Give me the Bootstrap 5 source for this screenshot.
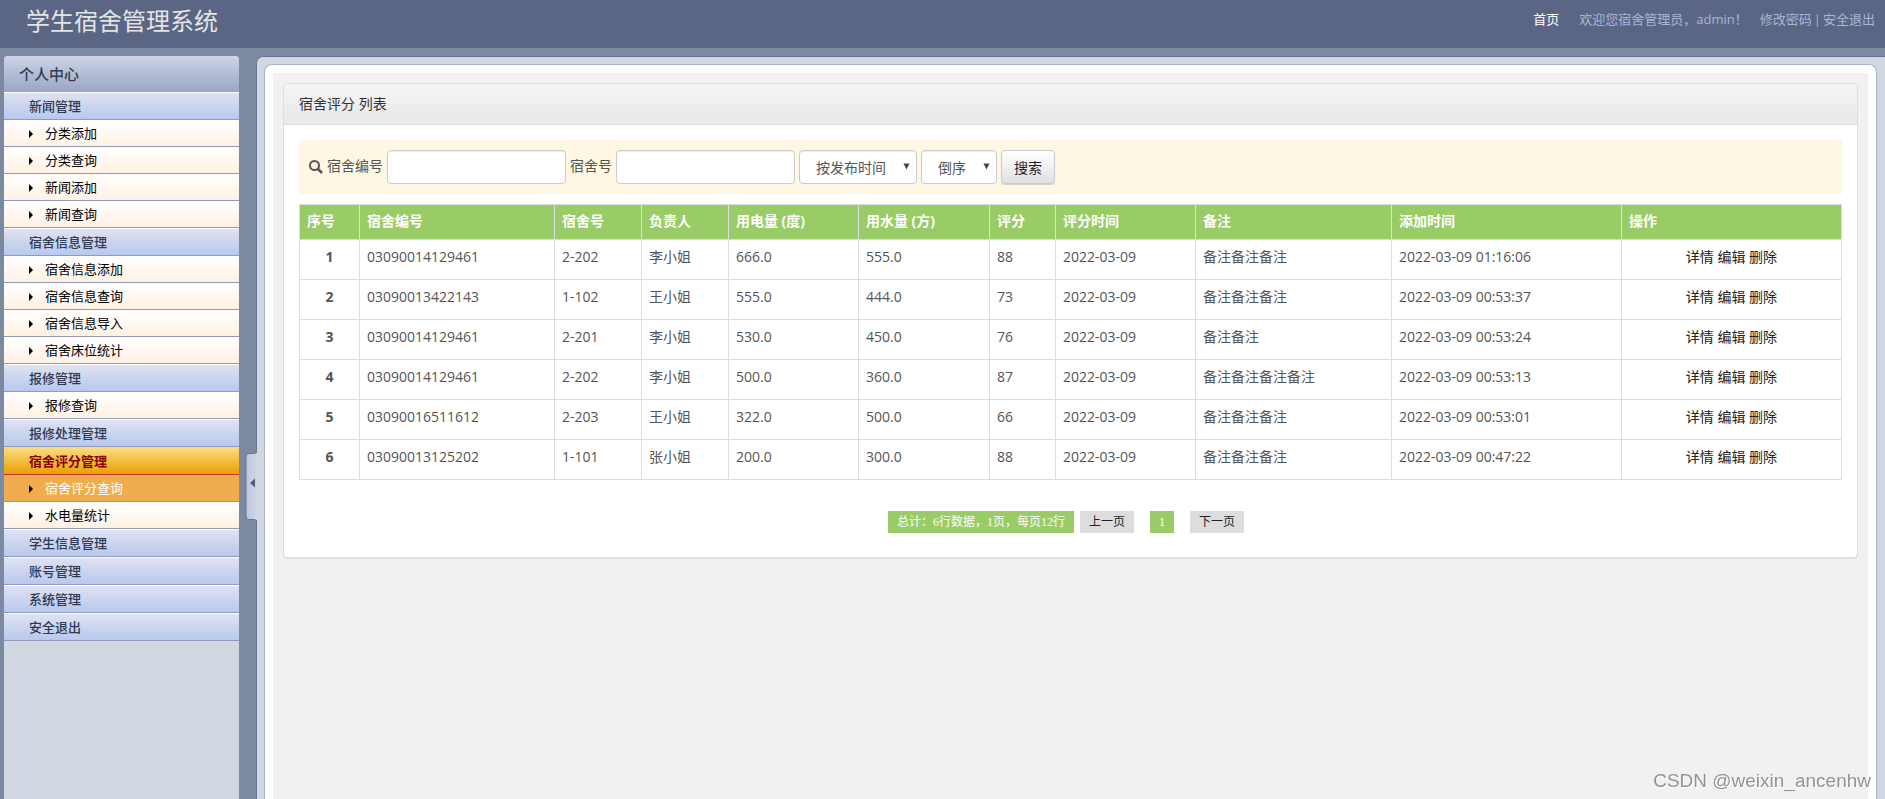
<!DOCTYPE html>
<html lang="zh-CN">
<head>
<meta charset="utf-8">
<meta name="viewport" content="width=device-width, initial-scale=1">
<title>学生宿舍管理系统</title>
<link rel="stylesheet" href="https://cdn.jsdelivr.net/npm/bootstrap@5.3.0/dist/css/bootstrap.min.css">
<style>
  body { font: 14px/20px "Open Sans", "Noto Sans CJK SC", sans-serif; color: #555; background: #7b8aa1; }
  a { text-decoration: none; }
  .site-head { height: 48px; background: #5a6684; padding: 0 10px 0 26px; }
  .site-title { font-size: 24px; line-height: 42px; color: #e4e4e4; font-weight: 400; }
  .site-links { font-size: 13px; line-height: 38px; color: #a9b6d8; gap: 12px; }
  .site-links a { color: #a9b6d8; }
  .site-links .home-link { color: #fff; margin-right: 8px; }
  .site-links .account { gap: 2px; }

  .side { width: 235px; margin: 8px 0 0 4px; background: #d1d8e2; border-radius: 4px 4px 0 0; font-size: 13px; }
  .side-head { height: 36px; line-height: 37px; padding-left: 15px; font-size: 15px; font-weight: 500; color: #333c52;
    border-radius: 4px 4px 0 0; background: linear-gradient(#cdd4e6, #9ba5c5); }
  .side a { display: block; }
  .grp { height: 28px; line-height: 26px; padding-left: 25px; font-weight: 500; color: #2e3850;
    border-top: 1px solid #fff; border-bottom: 1px solid #8f9bb9; background: linear-gradient(#dfe2f2, #b9c8ec); }
  .grp.on { color: #8a0000; border-top-color: #fbdc7d; border-bottom-color: #c8322a; background: linear-gradient(#fbdc7d, #e9a003); font-weight: 700; }
  .sub { height: 27px; line-height: 26px; padding-left: 25px; color: #000; border-bottom: 1px solid #8f9bb0;
    background: linear-gradient(#fff, #fff1e4); }
  .sub::before { content: ""; display: inline-block; border: 4px solid transparent; border-left-color: #000; border-right: 0; margin-right: 12px; }
  .sub.on { color: #fff; background: #f0ad4e; }

  .frame { margin: 8px 0 0 17px; border: solid #68739a; border-width: 1px 0 0 1px; border-radius: 7px 0 0 0; background: #d1d8e2; padding: 7px 8px 0 7px; }
  .sheet { border: 1px solid #aab5cb; border-bottom: 0; border-radius: 8px 8px 0 0; background: #fff; padding: 8px 8px 0; }
  .canvas { background: #f1f1f1; padding: 10px 10px 0; }
  .handle { left: -12px; top: 392px; width: 13px; height: 74px; }

  .panel { border: 1px solid #ddd; border-radius: 4px; box-shadow: 0 1px 1px rgba(0,0,0,.06); background: #fff; }
  .panel-top { height: 41px; line-height: 40px; padding-left: 15px; color: #333; font-size: 14px; border-bottom: 1px solid #ddd;
    border-radius: 3px 3px 0 0; background: linear-gradient(#f5f5f5, #e8e8e8); }
  .panel-main { padding: 15px 15px 24px; }
  .search { background: #fdf7e3; padding: 10px; gap: 4px; margin-bottom: 10px; }
  .search label { padding-bottom: 2px; }
  .search .form-control { width: 179px; height: 34px; border-color: #ccc; border-radius: 4px; box-shadow: inset 0 1px 1px rgba(0,0,0,.075); }
  .search .form-select { height: 34px; font-size: 14px; line-height: 20px; color: #555; border-color: #ccc; border-radius: 4px;
    padding: 7px 0 5px 16px; box-shadow: inset 0 1px 1px rgba(0,0,0,.075);
    background: #fff url("data:image/svg+xml,%3Csvg xmlns='http://www.w3.org/2000/svg' viewBox='0 0 14 14'%3E%3Cpath d='M1 1h12L7 13z' fill='%23444'/%3E%3C/svg%3E") no-repeat right 6px top 12px / 7px 7px; }
  .sel-field { width: 118px; }
  .sel-order { width: 76px; }
  .search .btn { height: 34px; width: 54px; padding: 0; font-size: 14px; color: #222; border: 1px solid #ccc; border-radius: 4px;
    background: linear-gradient(#fff, #e0e0e0); box-shadow: 0 1px 1px rgba(0,0,0,.15); }

  .grid { table-layout: fixed; margin: 0; color: #555; border-color: #ddd; }
  .grid th, .grid td { padding: 4px 7px; border: 1px solid #ddd; white-space: nowrap; }
  .grid thead th { height: 35px; padding: 4px 7px 8px; background: #9c6; color: #fff; font-weight: 700; }
  .grid tbody th, .grid tbody td { height: 40px; line-height: 26px; color: #555; }
  .grid td a { color: #222; }
  .pager { margin-top: 31px; padding-right: 9px; font: 12px/22px "Liberation Serif", "Noto Sans CJK SC", serif; }
  .pager > * { height: 22px; padding: 0 9px; background: #ddd; color: #222; }
  .pager .hot { background: #9c6; color: #fff; }
  .pager span { margin-right: 6px; }
  .csdn { right: 14px; bottom: 6px; font: 19px/24px "Liberation Sans", sans-serif; color: #939393; text-shadow: 1px 1px 0 #fff; }
</style>
</head>
<body>
<div class="d-flex flex-column min-vh-100">
  <header class="site-head d-flex justify-content-between align-items-start">
    <h1 class="site-title m-0">学生宿舍管理系统</h1>
    <nav class="site-links d-flex">
      <a class="home-link" href="#">首页</a>
      <span>欢迎您宿舍管理员，admin！</span>
      <span class="account d-flex"><a href="#">修改密码</a>|<a href="#">安全退出</a></span>
    </nav>
  </header>
  <div class="d-flex flex-grow-1">
    <nav class="side flex-shrink-0">
      <div class="side-head">个人中心</div>
      <a class="grp" href="#">新闻管理</a>
      <a class="sub" href="#">分类添加</a>
      <a class="sub" href="#">分类查询</a>
      <a class="sub" href="#">新闻添加</a>
      <a class="sub" href="#">新闻查询</a>
      <a class="grp" href="#">宿舍信息管理</a>
      <a class="sub" href="#">宿舍信息添加</a>
      <a class="sub" href="#">宿舍信息查询</a>
      <a class="sub" href="#">宿舍信息导入</a>
      <a class="sub" href="#">宿舍床位统计</a>
      <a class="grp" href="#">报修管理</a>
      <a class="sub" href="#">报修查询</a>
      <a class="grp" href="#">报修处理管理</a>
      <a class="grp on" href="#">宿舍评分管理</a>
      <a class="sub on" href="#">宿舍评分查询</a>
      <a class="sub" href="#">水电量统计</a>
      <a class="grp" href="#">学生信息管理</a>
      <a class="grp" href="#">账号管理</a>
      <a class="grp" href="#">系统管理</a>
      <a class="grp" href="#">安全退出</a>
    </nav>
    <div class="frame position-relative flex-grow-1 d-flex">
      <button type="button" class="handle position-absolute border-0 p-0 bg-transparent d-flex" aria-label="收起菜单">
        <svg width="13" height="74" viewBox="0 0 13 74">
          <defs><linearGradient id="hg"><stop offset="0" stop-color="#bcc6dd"/><stop offset="1" stop-color="#d1d8e2"/></linearGradient></defs>
          <path d="M13 0C13 3 12 4.500 9 4.500H4Q1 4.500 1 8V67Q1 70.500 4 70.500H9C12 70.500 13 72 13 74Z" fill="url(#hg)"/>
          <path d="M11.500 0C11.500 3 11 4.500 9 4.500H4Q1 4.500 1 8V67Q1 70.500 4 70.500H9C11 70.500 11.500 72 11.500 74" fill="none" stroke="#68739a"/>
          <path d="M10 29.500V38.500L5 34Z" fill="#4d5b7c"/>
        </svg>
      </button>
      <div class="sheet flex-grow-1 d-flex">
        <main class="canvas flex-grow-1">
          <section class="panel">
            <h2 class="panel-top m-0 fw-normal">宿舍评分 列表</h2>
            <div class="panel-main">
              <form class="search d-flex align-items-center">
                <svg width="14" height="14" viewBox="0 0 14 14" fill="none" stroke="#555" stroke-width="2"><circle cx="5.500" cy="5.500" r="4.500"/><path d="M8.500 8.500L13 13" stroke-width="2.500"/></svg>
                <label for="code">宿舍编号</label>
                <input class="form-control" id="code" type="text">
                <label for="room">宿舍号</label>
                <input class="form-control" id="room" type="text">
                <select class="form-select sel-field" aria-label="排序字段"><option>按发布时间</option></select>
                <select class="form-select sel-order" aria-label="排序方式"><option>倒序</option></select>
                <button class="btn" type="button">搜索</button>
              </form>
              <table class="table grid w-100">
                <colgroup><col style="width:3.890%"><col style="width:12.650%"><col style="width:5.640%"><col style="width:5.640%"><col style="width:8.430%"><col style="width:8.500%"><col style="width:4.280%"><col style="width:9.080%"><col style="width:12.710%"><col style="width:14.910%"><col></colgroup>
                <thead><tr><th>序号</th><th>宿舍编号</th><th>宿舍号</th><th>负责人</th><th>用电量 (度)</th><th>用水量 (方)</th><th>评分</th><th>评分时间</th><th>备注</th><th>添加时间</th><th>操作</th></tr></thead>
                <tbody>
                  <tr><th class="text-center">1</th><td>03090014129461</td><td>2-202</td><td>李小姐</td><td>666.0</td><td>555.0</td><td>88</td><td>2022-03-09</td><td>备注备注备注</td><td>2022-03-09 01:16:06</td><td class="text-center"><a href="#">详情</a> <a href="#">编辑</a> <a href="#">删除</a></td></tr>
                  <tr><th class="text-center">2</th><td>03090013422143</td><td>1-102</td><td>王小姐</td><td>555.0</td><td>444.0</td><td>73</td><td>2022-03-09</td><td>备注备注备注</td><td>2022-03-09 00:53:37</td><td class="text-center"><a href="#">详情</a> <a href="#">编辑</a> <a href="#">删除</a></td></tr>
                  <tr><th class="text-center">3</th><td>03090014129461</td><td>2-201</td><td>李小姐</td><td>530.0</td><td>450.0</td><td>76</td><td>2022-03-09</td><td>备注备注</td><td>2022-03-09 00:53:24</td><td class="text-center"><a href="#">详情</a> <a href="#">编辑</a> <a href="#">删除</a></td></tr>
                  <tr><th class="text-center">4</th><td>03090014129461</td><td>2-202</td><td>李小姐</td><td>500.0</td><td>360.0</td><td>87</td><td>2022-03-09</td><td>备注备注备注备注</td><td>2022-03-09 00:53:13</td><td class="text-center"><a href="#">详情</a> <a href="#">编辑</a> <a href="#">删除</a></td></tr>
                  <tr><th class="text-center">5</th><td>03090016511612</td><td>2-203</td><td>王小姐</td><td>322.0</td><td>500.0</td><td>66</td><td>2022-03-09</td><td>备注备注备注</td><td>2022-03-09 00:53:01</td><td class="text-center"><a href="#">详情</a> <a href="#">编辑</a> <a href="#">删除</a></td></tr>
                  <tr><th class="text-center">6</th><td>03090013125202</td><td>1-101</td><td>张小姐</td><td>200.0</td><td>300.0</td><td>88</td><td>2022-03-09</td><td>备注备注备注</td><td>2022-03-09 00:47:22</td><td class="text-center"><a href="#">详情</a> <a href="#">编辑</a> <a href="#">删除</a></td></tr>
                </tbody>
              </table>
              <nav class="pager d-flex justify-content-center" aria-label="分页">
                <span class="hot">总计：6行数据，1页，每页12行</span>
                <a href="#">上一页</a>
                <a class="hot mx-3" href="#">1</a>
                <a href="#">下一页</a>
              </nav>
            </div>
          </section>
        </main>
      </div>
    </div>
  </div>
</div>
<div class="csdn position-fixed">CSDN @weixin_ancenhw</div>
<script src="https://cdn.jsdelivr.net/npm/bootstrap@5.3.0/dist/js/bootstrap.bundle.min.js"></script>
</body>
</html>
